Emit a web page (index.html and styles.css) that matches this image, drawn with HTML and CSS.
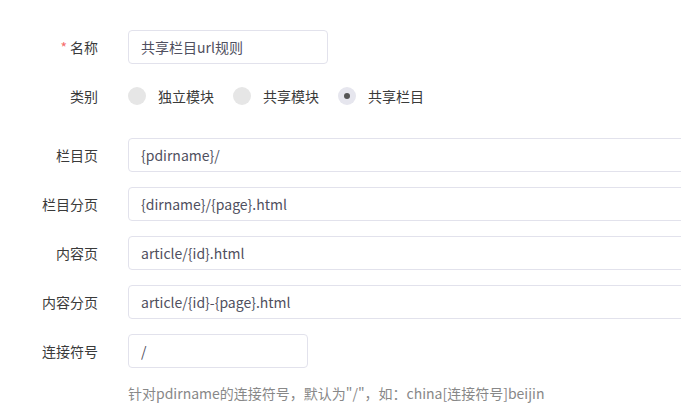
FILE: index.html
```html
<!DOCTYPE html>
<html lang="zh-CN">
<head>
  <meta charset="UTF-8">
  <meta name="viewport" content="width=device-width, initial-scale=1.0">
  <title>共享栏目url规则</title>
  <link rel="stylesheet" href="styles.css">
</head>
<body>
  <form class="rule-form">
    <div class="form-item">
      <label class="form-label"><span class="required">*</span>名称</label>
      <input class="form-input short" type="text" value="共享栏目url规则">
    </div>
    <div class="form-item radio-item">
      <label class="form-label">类别</label>
      <div class="radio-group">
        <span class="radio"><span class="radio-circle"></span>独立模块</span>
        <span class="radio"><span class="radio-circle"></span>共享模块</span>
        <span class="radio checked"><span class="radio-circle"></span>共享栏目</span>
      </div>
    </div>
    <div class="form-item">
      <label class="form-label">栏目页</label>
      <input class="form-input" type="text" value="{pdirname}/">
    </div>
    <div class="form-item">
      <label class="form-label">栏目分页</label>
      <input class="form-input" type="text" value="{dirname}/{page}.html">
    </div>
    <div class="form-item">
      <label class="form-label">内容页</label>
      <input class="form-input" type="text" value="article/{id}.html">
    </div>
    <div class="form-item">
      <label class="form-label">内容分页</label>
      <input class="form-input" type="text" value="article/{id}-{page}.html">
    </div>
    <div class="form-item">
      <label class="form-label">连接符号</label>
      <input class="form-input tiny" type="text" value="/">
    </div>
    <p class="form-help">针对pdirname的连接符号，默认为"/"，如：china[连接符号]beijin</p>
  </form>
</body>
</html>
```

FILE: styles.css
```css
body {
  margin: 0;
  background: #fff;
  font-family: "Noto Sans CJK SC", "Noto Sans", sans-serif;
  font-size: 14px;
  color: #3a3a3a;
  overflow: hidden;
}
.rule-form {
  padding-top: 30px;
}
.form-item {
  display: flex;
  align-items: center;
  height: 34px;
  margin-bottom: 15px;
}
.radio-item {
  margin-bottom: 25px;
}
.form-label {
  width: 98px;
  margin-right: 30px;
  text-align: right;
  flex-shrink: 0;
}
.required {
  color: #f56c6c;
  margin-right: 3px;
}
.form-input {
  width: 580px;
  height: 34px;
  box-sizing: border-box;
  border: 1px solid #e2e2ec;
  border-radius: 4px;
  padding: 0 12px;
  font-family: inherit;
  font-size: 14px;
  color: #505060;
  outline: none;
  flex-shrink: 0;
}
.form-input.short {
  width: 200px;
}
.form-input.tiny {
  width: 180px;
}
.radio-group {
  display: flex;
  align-items: center;
}
.radio {
  display: flex;
  align-items: center;
  margin-right: 19px;
}
.radio-circle {
  width: 18px;
  height: 18px;
  border-radius: 50%;
  background: #e6e6e6;
  margin-right: 12px;
  display: flex;
  align-items: center;
  justify-content: center;
}
.radio.checked .radio-circle {
  background: #e6e6ee;
}
.radio.checked .radio-circle::after {
  content: "";
  width: 6px;
  height: 6px;
  border-radius: 50%;
  background: #555;
}
.form-help {
  margin: 10px 0 0 128px;
  line-height: 20px;
  color: #888;
}
```
